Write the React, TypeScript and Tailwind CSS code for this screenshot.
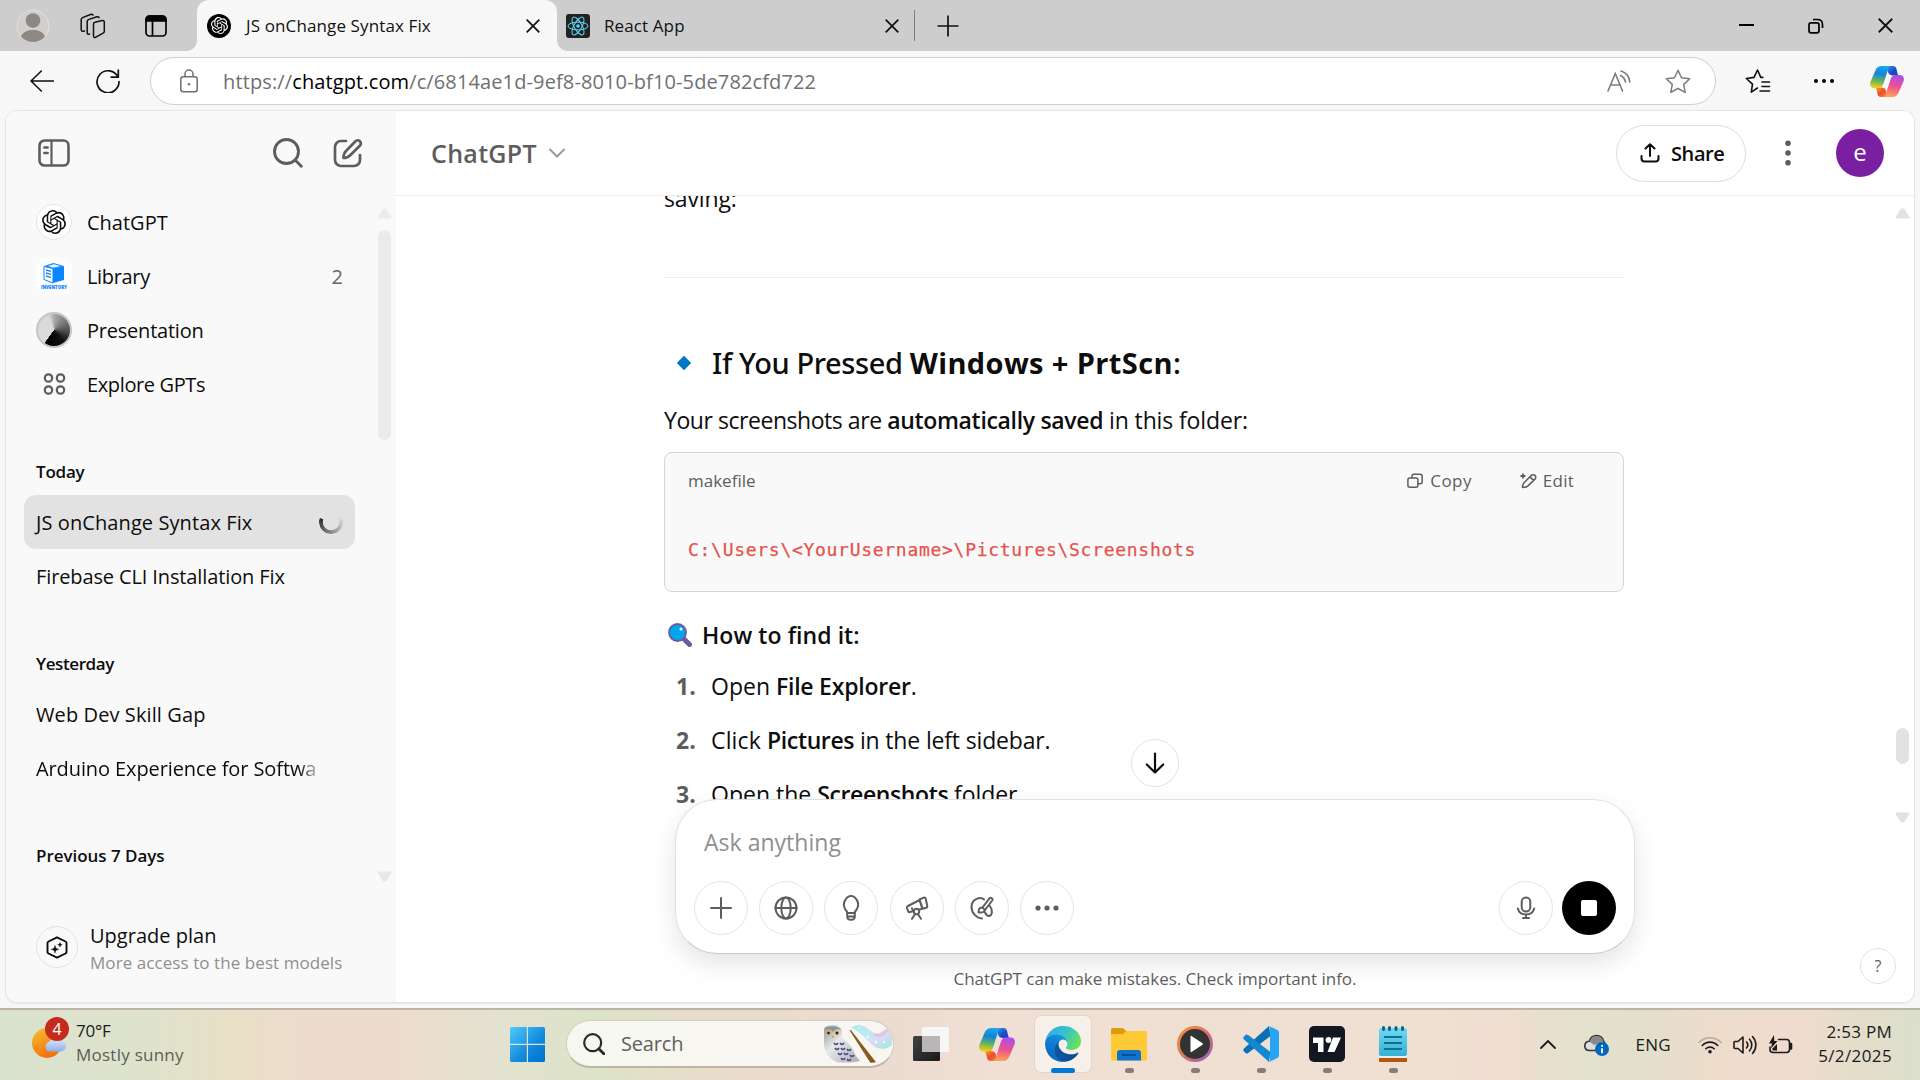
import React from 'react';
import { SiOpenai } from 'react-icons/si';

type IconProps = { className?: string };

function ReactLogo({ className = '' }: IconProps) {
  return (
    <svg viewBox="0 0 24 24" className={className} fill="none" stroke="#61dafb" strokeWidth="1">
      <rect width="24" height="24" rx="3" fill="#222" stroke="none" />
      <ellipse cx="12" cy="12" rx="10" ry="3.9" />
      <ellipse cx="12" cy="12" rx="10" ry="3.9" transform="rotate(60 12 12)" />
      <ellipse cx="12" cy="12" rx="10" ry="3.9" transform="rotate(120 12 12)" />
      <circle cx="12" cy="12" r="1.8" fill="#61dafb" stroke="none" />
    </svg>
  );
}

function Cross({ className = '' }: IconProps) {
  return (
    <svg viewBox="0 0 14 14" className={className} stroke="#111" strokeWidth="1.7">
      <path d="M.7.7l12.6 12.6M13.3.7L.7 13.3" />
    </svg>
  );
}

function Copilot({ className = '', id }: IconProps & { id: string }) {
  return (
    <svg viewBox="0 0 36 33" className={className}>
      <defs>
        <linearGradient id={id + 'a'} x1="0.5" y1="0" x2="0.35" y2="1">
          <stop offset="0" stopColor="#18a8ee" />
          <stop offset=".35" stopColor="#1583d8" />
          <stop offset=".65" stopColor="#5bb06a" />
          <stop offset="1" stopColor="#f5d00c" />
        </linearGradient>
        <linearGradient id={id + 'b'} x1="0" y1="0" x2="1" y2="1">
          <stop offset="0" stopColor="#2aa4f4" />
          <stop offset=".6" stopColor="#1b48c8" />
          <stop offset="1" stopColor="#1746b4" />
        </linearGradient>
        <linearGradient id={id + 'c'} x1="0.6" y1="0" x2="0.4" y2="1">
          <stop offset="0" stopColor="#a94df0" />
          <stop offset=".5" stopColor="#ee5090" />
          <stop offset="1" stopColor="#fca552" />
        </linearGradient>
        <linearGradient id={id + 'd'} x1="0" y1="0" x2="1" y2="1">
          <stop offset="0" stopColor="#f6a01c" />
          <stop offset=".5" stopColor="#ef4b2f" />
          <stop offset="1" stopColor="#fb8a50" />
        </linearGradient>
      </defs>
      <path d="M17 0h7.5c2 0 3 1.2 3.5 3l1.8 7H24c-2.5 0-4-1-4.700-3z" fill={`url(#${id}b)`} />
      <path d="M19 33h-7.500c-2 0-3-1.200-3.500-3L6.200 23H12c2.500 0 4 1 4.700 3z" fill={`url(#${id}d)`} />
      <path d="M5.500 5C6.800 1.600 9 0 12 0h11c-2 0-3 1.200-3.600 3L14 19.500C13.200 22 11.500 23.500 9 23.500H4.500C.8 23.500-.6 20.500.3 17z" fill={`url(#${id}a)`} />
      <path d="M30.500 28C29.200 31.400 27 33 24 33H13c2 0 3-1.200 3.600-3L22 13.500C22.800 11 24.500 9.500 27 9.500h4.500c3.700 0 5.100 3 4.200 6.500z" fill={`url(#${id}c)`} />
    </svg>
  );
}

function TabStrip() {
  return (
    <div className="flex h-[51px] items-center bg-[#cdcdcd]">
      <svg viewBox="0 0 34 34" className="ml-4 h-[34px] w-[34px] shrink-0">
        <circle cx="17" cy="17" r="16" fill="#d2d0cd" stroke="#e3e1dd" strokeWidth="1" />
        <circle cx="17" cy="11.500" r="7.300" fill="#8d8884" />
        <path d="M5 27.500C7 22.500 12 21 17 21s10 1.500 12 6.500A16 16 0 0 1 17 33 16 16 0 0 1 5 27.500z" fill="#8d8884" />
      </svg>
      <svg viewBox="0 0 26 26" className="ml-[30px] h-[26px] w-[26px] shrink-0" fill="none" stroke="#111" strokeWidth="1.500" strokeLinejoin="round" strokeLinecap="round">
        <path d="M15 9.300l7.300-1.700c1.300-.3 2 .3 2 1.500v9.300c0 .9-.4 1.400-1.200 1.700l-7.600 4.200c-1 .5-2-.1-2-1.200V11c0-1 .4-1.500 1.500-1.700z" />
        <path d="M9.500 21c-1.500.5-2.300 0-2.300-1.300V8.500c0-1 .3-1.600 1.200-1.900l8.500-2.800c1-.3 1.800 0 2.200.8" />
        <path d="M4.500 18c-2 .6-3.300.1-3.300-1.600V6.800c0-1 .4-1.800 1.400-2.200L10.500 1.500c1-.4 2-.2 2.500.6" />
      </svg>
      <svg viewBox="0 0 22 22" className="ml-[39px] h-[22px] w-[22px] shrink-0" fill="none" stroke="#000" strokeWidth="1.700">
        <rect x="1" y="1" width="20" height="20" rx="3.500" />
        <path d="M1 6V4.500A3.500 3.500 0 0 1 4.500 1h13A3.500 3.500 0 0 1 21 4.500V6z" fill="#000" />
        <path d="M7.500 6v15" />
      </svg>
      <div className="ml-[20px] h-[10px] w-[10px] shrink-0 self-end bg-[radial-gradient(circle_at_0_0,transparent_9.500px,#f7f7f7_10px)]" />
      <div className="flex h-full w-[360px] shrink-0 items-center rounded-t-xl bg-[#f7f7f7] pl-[10px] pr-[17px]">
        <div className="flex h-6 w-6 items-center justify-center rounded-full bg-black">
          <SiOpenai className="h-[17px] w-[17px] text-white" />
        </div>
        <span className="ml-[15px] flex-1 text-[17px] leading-[51px] tracking-[0.12px]">JS onChange Syntax Fix</span>
        <Cross className="h-[14px] w-[14px]" />
      </div>
      <div className="h-[10px] w-[10px] shrink-0 self-end bg-[radial-gradient(circle_at_100%_0,transparent_9.500px,#f7f7f7_10px)]" />
      <ReactLogo className="-ml-[1px] h-6 w-6" />
      <span className="ml-[14px] w-[281px] text-[17px] leading-[51px] tracking-[0.11px]">React App</span>
      <Cross className="h-[14px] w-[14px]" />
      <div className="ml-[15px] h-[31px] w-px bg-[#7d7d7d]" />
      <svg viewBox="0 0 22 22" className="ml-[22px] h-[22px] w-[22px]" stroke="#111" strokeWidth="1.700">
        <path d="M11 .5v21M.5 11h21" />
      </svg>
      <div className="ml-auto flex items-center gap-[54px] pr-[27px]">
        <svg viewBox="0 0 15 15" className="h-[15px] w-[15px]" stroke="#000" strokeWidth="2">
          <path d="M0 7h15" />
        </svg>
        <svg viewBox="0 0 16 16" className="h-4 w-4" fill="none" stroke="#000" strokeWidth="1.700">
          <rect x="1" y="4.800" width="10" height="10" rx="2" />
          <path d="M5 1.500h4.500c3 0 5 2 5 5V10" />
        </svg>
        <Cross className="h-[15px] w-[15px]" />
      </div>
    </div>
  );
}

function AddressRow() {
  return (
    <div className="flex h-[59px] items-start bg-[#f7f7f7] pt-[6px]">
      <div className="flex h-[48px] w-[150px] shrink-0 items-center">
        <svg viewBox="0 0 24 22" className="ml-[30px] h-[22px] w-6" fill="none" stroke="#111" strokeWidth="1.600" strokeLinecap="round" strokeLinejoin="round">
          <path d="M23.300 11H1M11.300 1L1 11l10.300 10" />
        </svg>
        <svg viewBox="0 0 24 24" className="ml-[42px] h-6 w-6" fill="none" stroke="#111" strokeWidth="1.700" strokeLinecap="round" strokeLinejoin="round">
          <path d="M22 8.200A11 11 0 1 0 23 12.500M22.300 1.200v7h-7" />
        </svg>
      </div>
      <div className="flex h-[48px] w-[1566px] items-center rounded-full border border-[#cfcfcf] bg-white">
        <svg viewBox="0 0 18 24" className="ml-[29px] h-6 w-[18px]" fill="none" stroke="#6f6f6f" strokeWidth="1.500">
          <rect x=".8" y="7.800" width="16.400" height="15" rx="2.500" />
          <path d="M5 7.800V5a4 4 0 0 1 8 0v2.800" />
          <circle cx="9" cy="15.300" r="1.200" fill="#6f6f6f" stroke="none" />
        </svg>
        <span className="mt-[1px] ml-[25px] text-[20px] leading-[47px] tracking-[0.12px] text-[#707070]">
          https://<span className="text-black">chatgpt.com</span>/c/6814ae1d-9ef8-8010-bf10-5de782cfd722
        </span>
        <div className="ml-auto flex items-center gap-[34px] pr-[24px]">
          <svg viewBox="0 0 24 22" className="h-[22px] w-6" fill="none" stroke="#7b7b7b" strokeWidth="1.600" strokeLinecap="round">
            <path d="M1 21L8.300 3.500 15.500 21M3.500 15h9.700M14 1a13 13 0 0 1 8.800 11M13.500 5.500a9 9 0 0 1 5 6.500" />
          </svg>
          <svg viewBox="0 0 26 25" className="h-[25px] w-[26px]" fill="none" stroke="#7b7b7b" strokeWidth="1.500" strokeLinejoin="round">
            <path d="M13 1.300l3.500 7.400 8.200 1.100-6 5.600 1.500 8-7.200-3.900-7.200 3.900 1.500-8-6-5.600 8.200-1.100z" />
          </svg>
        </div>
      </div>
      <div className="flex h-[48px] items-center">
        <svg viewBox="0 0 26 25" className="ml-[29px] h-[25px] w-[26px]" fill="none" stroke="#111" strokeWidth="1.600" strokeLinejoin="round" strokeLinecap="round">
          <path d="M12.500 19l-6.200 4.200 1.200-8L1.300 9.500l7.700-1.100L12.500 1l3.300 7.400h2M17 13h7.500M17 17.500h7.500M15 22h9.500" />
        </svg>
        <svg viewBox="0 0 20 4" className="ml-[43px] h-1 w-5" fill="#000">
          <circle cx="2" cy="2" r="2" />
          <circle cx="10" cy="2" r="2" />
          <circle cx="18" cy="2" r="2" />
        </svg>
        <Copilot id="tb" className="ml-[36px] h-[31px] w-[34px]" />
      </div>
    </div>
  );
}

function Triangle({ className = '', fill, down }: IconProps & { fill: string; down?: boolean }) {
  return (
    <svg viewBox="0 0 15 11" className={className} fill={fill} stroke={fill} strokeWidth="2" strokeLinejoin="round">
      {down ? <path d="M1.500 1.500h12L8.500 9.500h-2z" /> : <path d="M1.500 9.500h12L8.500 1.500h-2z" />}
    </svg>
  );
}

function InventoryIcon() {
  return (
    <svg viewBox="0 0 36 36" className="h-9 w-9">
      <rect width="36" height="36" rx="10" fill="#fdfdfd" />
      <path d="M8 8.500l9 2v14.500l-9-3.500z" fill="#fff" stroke="#0a84ff" strokeWidth="1" />
      <path d="M17 10.500l11-2.500v14L17 25z" fill="#0a84ff" />
      <path d="M8 8l9.500-3L28 8l-11 2.800z" fill="#0a84ff" />
      <path d="M12 8l6-1.700L24.500 8 17 9.700z" fill="#fff" />
      <path d="M10 12l5 1.300M10 15l5 1.300M10 18l5 1.300" stroke="#0a84ff" strokeWidth="1.300" />
      <text x="18" y="30.500" textAnchor="middle" fontFamily="Open Sans, sans-serif" fontSize="4.400" fontWeight="800" fill="#0a84ff" textLength="26">INVENTORY</text>
    </svg>
  );
}

function GptItem({ icon, label, track, count }: { icon: React.ReactNode; label: string; track: string; count?: string }) {
  return (
    <div className="flex h-[54px] items-center pl-3 pr-3">
      <div className="flex h-9 w-9 items-center justify-center">{icon}</div>
      <span className={'mt-[2px] ml-[15px] flex-1 text-[20px] ' + track}>{label}</span>
      {count && <span className="mt-[2px] text-[20px] text-[#666]">{count}</span>}
    </div>
  );
}

function Sidebar() {
  return (
    <aside className="flex w-[390px] shrink-0 flex-col bg-[#f9f9f9] text-[#0d0d0d]">
      <div className="flex h-[84px] items-center pl-[32px] text-[#5d5d5d]">
        <svg viewBox="0 0 32 28" className="h-7 w-8" fill="none" stroke="currentColor" strokeWidth="2.600">
          <rect x="1.500" y="1.500" width="29" height="25" rx="5" />
          <path d="M13.500 1.500v25" strokeWidth="2.200" />
          <path d="M6.300 8.500h3.400M6.300 14h3.400" strokeWidth="2.400" strokeLinecap="round" />
        </svg>
        <svg viewBox="0 0 30 30" className="ml-[203px] h-[30px] w-[30px]" fill="none" stroke="currentColor" strokeWidth="2.900" strokeLinecap="round">
          <circle cx="13.500" cy="13.500" r="12" />
          <path d="M22.300 22.300l6 6" />
        </svg>
        <svg viewBox="0 0 30 30" className="ml-[30px] h-[30px] w-[30px]" fill="none" stroke="currentColor" strokeWidth="2.700" strokeLinecap="round" strokeLinejoin="round">
          <path d="M13 3H8a6 6 0 0 0-6 6v13a6 6 0 0 0 6 6h13a6 6 0 0 0 6-6v-5" />
          <path d="M10.500 20c0-3 .5-5 2.500-7L22.500 3.300a3 3 0 0 1 4.500 4.200L17.500 17c-2 2-4 3-7 3z" />
        </svg>
      </div>
      <div className="flex h-[705px]">
        <div className="w-[331px] ml-[18px]">
          <GptItem
            icon={
              <div className="flex h-9 w-9 items-center justify-center rounded-full border border-[#e5e5e5] bg-white">
                <SiOpenai className="h-6 w-6 text-[#0d0d0d]" />
              </div>
            }
            label="ChatGPT"
            track=""
          />
          <GptItem icon={<InventoryIcon />} label="Library" track="tracking-[-0.33px]" count="2" />
          <GptItem
            icon={<div className="h-9 w-9 rounded-full border-2 border-[#c6c6c6] bg-[conic-gradient(#aaa_0deg,#555_90deg,#111_140deg,#000_215deg,#dcdcdc_217deg,#d8d8d8_340deg,#aaa_360deg)]" />}
            label="Presentation"
            track="tracking-[-0.22px]"
          />
          <GptItem
            icon={
              <svg viewBox="0 0 24 24" className="h-6 w-6" fill="none" stroke="#5d5d5d" strokeWidth="2.200">
                <circle cx="6.500" cy="6" r="3.700" />
                <circle cx="18.500" cy="6" r="3.700" />
                <circle cx="6.500" cy="18" r="3.700" />
                <circle cx="18.500" cy="18" r="3.700" />
              </svg>
            }
            label="Explore GPTs"
            track="tracking-[-0.37px]"
          />
          <h3 className="mt-[49px] h-[24px] pl-3 text-[17px] leading-6 font-semibold tracking-[-0.2px]">Today</h3>
          <div className="mt-[11px] flex h-[54px] items-center rounded-xl bg-[#e2e2e2] px-3">
            <span className="mt-[2px] flex-1 text-[20px] tracking-[0.09px]">JS onChange Syntax Fix</span>
            <div className="h-6 w-6 rounded-full bg-[conic-gradient(transparent_50deg,#e0e0e0_60deg,#aaa_140deg,#333_280deg,#333_288deg,transparent_292deg)] [mask:radial-gradient(circle,transparent_7.800px,#000_8.600px)]" />
          </div>
          <div className="flex h-[54px] items-center px-3 pt-[2px] text-[20px] tracking-[-0.12px]">Firebase CLI Installation Fix</div>
          <h3 className="mt-[49px] h-[24px] pl-3 text-[17px] leading-6 font-semibold tracking-[-0.4px]">Yesterday</h3>
          <div className="mt-[11px] flex h-[54px] items-center px-3 pt-[2px] text-[20px] tracking-[0.1px]">Web Dev Skill Gap</div>
          <div className="flex h-[54px] items-center px-3 pt-[2px] text-[20px] tracking-[-0.1px]">
            <span className="w-[282px] overflow-hidden whitespace-nowrap [mask-image:linear-gradient(90deg,#000_262px,transparent_288px)]">Arduino Experience for Softwa</span>
          </div>
          <h3 className="mt-[49px] h-[24px] pl-3 text-[17px] leading-6 font-semibold tracking-[-0.04px]">Previous 7 Days</h3>
        </div>
        <div className="ml-[22px] flex w-[15px] flex-col items-center">
          <Triangle fill="#ececec" className="mt-[13px] h-[11px] w-[15px]" />
          <div className="mt-[11px] h-[210px] w-[13px] rounded-full bg-[#ebebeb]" />
          <Triangle fill="#e8e8e8" down className="mt-[431px] h-[11px] w-[15px] shrink-0" />
        </div>
      </div>
      <div className="flex items-start pl-[30px] pt-[26px]">
        <div className="flex h-[42px] w-[42px] items-center justify-center rounded-full border border-[#e2e2e2]">
          <svg viewBox="0 0 22 23" className="h-[23px] w-[22px]" fill="none" stroke="#0d0d0d" strokeWidth="1.900" strokeLinejoin="round">
            <path d="M11 1.300l8.500 4.200q1 .5 1 1.500v9q0 1-1 1.500L11 21.700l-8.500-4.200q-1-.5-1-1.500V7q0-1 1-1.500z" />
            <path d="M9 9.500c.4 2.500 1.300 3.400 3.800 3.800-2.500.4-3.400 1.300-3.800 3.800-.4-2.500-1.300-3.400-3.800-3.800 2.500-.4 3.400-1.300 3.800-3.800zM14 6.500c.2 1.500.8 2 2.200 2.200-1.400.3-2 .8-2.200 2.300-.3-1.500-.8-2-2.300-2.300 1.500-.2 2-.7 2.300-2.200z" fill="#0d0d0d" strokeWidth=".5" />
          </svg>
        </div>
        <div className="-mt-[4px] ml-[12px] flex flex-col">
          <span className="text-[20px] leading-[28px] tracking-[0.02px]">Upgrade plan</span>
          <span className="text-[17px] leading-[26px] tracking-[0.07px] text-[#8f8f8f]">More access to the best models</span>
        </div>
      </div>
    </aside>
  );
}

function MainHeader() {
  return (
    <header className="flex h-[85px] shrink-0 items-center border-b border-[#ededed] pl-[35px] pr-[30px]">
      <h1 className="mt-[1px] text-[25px] leading-none font-semibold tracking-[0.3px] text-[#5d5d5d]">ChatGPT</h1>
      <svg viewBox="0 0 18 10" className="ml-[11px] h-[10px] w-[18px]" fill="none" stroke="#999" strokeWidth="2">
        <path d="M1.500 1L9 8.500 16.500 1" />
      </svg>
      <div className="ml-auto flex h-[57px] w-[130px] items-center rounded-full border border-[#dddddd] pl-[23px] text-[#0d0d0d]">
        <svg viewBox="0 0 20 20" className="h-5 w-5" fill="none" stroke="currentColor" strokeWidth="2" strokeLinecap="round" strokeLinejoin="round">
          <path d="M1.500 13v2.500a3 3 0 0 0 3 3h11a3 3 0 0 0 3-3V13M10 13V1.500M5.500 5.500L10 1.200l4.500 4.300" />
        </svg>
        <span className="mt-[1px] ml-[11px] text-[20px] font-semibold tracking-[-0.4px]">Share</span>
      </div>
      <svg viewBox="0 0 6 26" className="ml-[39px] h-[26px] w-[6px]" fill="#5d5d5d">
        <circle cx="3" cy="3.200" r="2.800" />
        <circle cx="3" cy="13" r="2.800" />
        <circle cx="3" cy="22.800" r="2.800" />
      </svg>
      <div className="ml-[45px] flex h-12 w-12 items-center justify-center rounded-full bg-[#7b1fa2] pb-[3px] text-[24px] font-medium text-white">e</div>
    </header>
  );
}

function ListRow({ n, children }: { n: number; children: React.ReactNode }) {
  return (
    <li className="flex h-9 leading-9">
      <span className="w-[47px] pl-[12px] font-bold text-[#5d5d5d]">{n}.</span>
      <span className="whitespace-pre">{children}</span>
    </li>
  );
}

function Article() {
  return (
    <div className="ml-[268px] w-[960px] text-[23px] text-[#0d0d0d]">
      <p className="-mt-[16px] h-9 leading-9 tracking-[-0.14px]">saving:</p>
      <hr className="mt-[61px] border-[#ececec]" />
      <h3 className="mt-[65px] flex h-10 items-center text-[29px] leading-10 font-medium">
        <svg viewBox="0 0 16 16" className="ml-3 h-4 w-4">
          <path d="M8 .8L15.200 8 8 15.200.8 8z" fill="#0077c2" />
        </svg>
        <span className="ml-[20px] font-['Noto_Sans',sans-serif] whitespace-pre tracking-[-0.38px]">If You Pressed </span>
        <b className="whitespace-pre font-bold tracking-[0.38px]">Windows + PrtScn</b>
        <span className="font-semibold">:</span>
      </h3>
      <p className="mt-[19px] h-9 leading-9 tracking-[-0.3px]">
        <span className="tracking-[-0.45px]">Your screenshots are </span>
        <b className="font-semibold tracking-[-0.32px]">automatically saved</b>
        <span className="tracking-[-0.13px]"> in this folder:</span>
      </p>
      <div className="mt-[14px] h-[140px] rounded-lg border border-[#d4d4d4] bg-[#f9f9f9] pl-[23px]">
        <div className="flex h-[56px] items-center text-[17px] text-[#5d5d5d]">
          <span>makefile</span>
          <svg viewBox="0 0 16 16" className="ml-auto h-4 w-4" fill="none" stroke="currentColor" strokeWidth="1.500">
            <rect x=".9" y="5" width="10" height="9.300" rx="2" />
            <path d="M5 5V3.200a2 2 0 0 1 2-2h6.200a2 2 0 0 1 2 2v5.600a2 2 0 0 1-2 2H11" />
          </svg>
          <span className="ml-[7px] tracking-[0.4px]">Copy</span>
          <svg viewBox="0 0 17 16" className="ml-[48px] h-4 w-[17px]" fill="none" stroke="currentColor" strokeWidth="1.500" strokeLinejoin="round">
            <path d="M2.500 14.500c0-2.500.3-3.500 1.500-4.800l7.300-7.300a2.600 2.600 0 0 1 3.700 3.700l-7.300 7c-1.300 1.200-2.500 1.400-5.200 1.400zM10.500 3.500c.2 2 1.300 3 3.300 3.300" />
            <path d="M3 .5v5M.5 3h5" strokeWidth="1.800" />
          </svg>
          <span className="mr-[49px] ml-[6px] tracking-[0.25px]">Edit</span>
        </div>
        <code className="mt-[29px] block font-['DejaVu_Sans_Mono',monospace] text-[18px] leading-6 tracking-[0.71px] text-[#e5534b] [-webkit-text-stroke:0.25px_#e5534b]">
          {'C:\\Users\\<YourUsername>\\Pictures\\Screenshots'}
        </code>
      </div>
      <h4 className="mt-[25px] flex h-9 items-center leading-9 font-semibold">
        <svg viewBox="0 0 24 24" className="ml-1 h-6 w-6">
          <path d="M15.500 15.500l6 6" stroke="#6b5ba0" strokeWidth="5" strokeLinecap="round" />
          <circle cx="9.500" cy="9.500" r="8.500" fill="#00a6ed" stroke="#6b5ba0" strokeWidth="1.800" />
          <circle cx="13" cy="6" r="1.500" fill="#fff" />
        </svg>
        <span className="ml-[10px] tracking-[0.07px]">How to find it:</span>
      </h4>
      <ol className="mt-[15px] flex flex-col gap-[18px]">
        <ListRow n={1}>
          Open <b className="font-semibold tracking-[-0.23px]">File Explorer</b>.
        </ListRow>
        <ListRow n={2}>
          <span className="tracking-[0.15px]">Click </span>
          <b className="font-semibold tracking-[-0.38px]">Pictures</b>
          <span className="tracking-[-0.16px]"> in the left sidebar.</span>
        </ListRow>
        <ListRow n={3}>
          Open the <b className="font-semibold tracking-[-0.38px]">Screenshots</b>
          <span className="tracking-[-0.1px]"> folder.</span>
        </ListRow>
      </ol>
    </div>
  );
}

function RoundButton({ children }: { children: React.ReactNode }) {
  return <button className="flex h-[54px] w-[54px] items-center justify-center rounded-full border border-[#e5e5e5] text-[#5d5d5d]">{children}</button>;
}

const line = { fill: 'none', stroke: 'currentColor', strokeWidth: 2, strokeLinecap: 'round', strokeLinejoin: 'round' } as const;

function Composer() {
  return (
    <div className="flex h-[155px] w-[960px] flex-col rounded-[42px] border border-[#e0e0e0] border-b-[#c9c9c9] bg-white pr-[18px] pl-[18px] shadow-[0_10px_26px_rgba(0,0,0,0.11)]">
      <div className="mt-[24px] h-9 pl-[10px] text-[23px] leading-9 tracking-[0.02px] text-[#8f8f8f]">Ask anything</div>
      <div className="mt-[21px] flex gap-[11.2px]">
        <RoundButton>
          <svg viewBox="0 0 24 24" className="h-6 w-6" {...line}>
            <path d="M12 2v20M2 12h20" />
          </svg>
        </RoundButton>
        <RoundButton>
          <svg viewBox="0 0 24 24" className="h-6 w-6" {...line}>
            <circle cx="12" cy="12" r="10.500" />
            <ellipse cx="12" cy="12" rx="4.700" ry="10.500" />
            <path d="M1.500 12h21" />
          </svg>
        </RoundButton>
        <RoundButton>
          <svg viewBox="0 0 24 26" className="h-[26px] w-6" {...line}>
            <path d="M8.200 18c0-1.800-.8-2.600-2-3.800A9 9 0 0 1 12 .8a9 9 0 0 1 5.800 13.400c-1.200 1.200-2 2-2 3.800zM8.200 18v3.500c0 2 1.200 3.300 3.800 3.300s3.800-1.300 3.800-3.300V18M8.500 21.500h7" />
          </svg>
        </RoundButton>
        <RoundButton>
          <svg viewBox="0 0 24 24" className="h-6 w-6" {...line}>
            <path d="M14.500 3.500l4.200-1.800c.9-.4 1.600-.1 2 .8l1.500 7.300c.3 1-.1 1.600-1 1.900l-3.500 1zM14.500 4L3 10c-1 .5-1.300 1-1 2l1 3c.3 1 1 1.300 2 1l12.300-3.300M14.500 4l2.800 8.700M8 15.300l-1-3" />
            <circle cx="11.500" cy="15.500" r="2.700" fill="#fff" />
            <path d="M10 18.300l-3 4.500M13 18.300l3 4.500" />
          </svg>
        </RoundButton>
        <RoundButton>
          <svg viewBox="0 0 24 24" className="h-6 w-6" {...line}>
            <path d="M14 3.500C11 .5 1.500 2.500 1.500 11c0 6 5 11 10.500 11.500" />
            <path d="M12.500 11.500L19.500 2.300c1.600-1.300 3.800.3 2.700 2.200L15 14" />
            <path d="M12.500 11.500c-3-.2-4 1.500-3.900 5 3.500.3 5.700 0 6.400-2.500l-2.500-2.500" />
            <path d="M19.500 9.500c3.500 4.500 3 10-.5 10.500-2 .3-3-1.500-4-3.500" />
          </svg>
        </RoundButton>
        <RoundButton>
          <svg viewBox="0 0 24 6" className="h-[6px] w-6" fill="currentColor">
            <circle cx="3" cy="3" r="2.600" />
            <circle cx="12" cy="3" r="2.600" />
            <circle cx="21" cy="3" r="2.600" />
          </svg>
        </RoundButton>
        <div className="ml-auto flex gap-[9px]">
          <RoundButton>
            <svg viewBox="0 0 20 24" className="h-6 w-5" {...line}>
              <rect x="5.700" y="1.500" width="8.600" height="14" rx="4.300" />
              <path d="M1.800 12.500c1 4 4.500 6 8.200 6s7.200-2 8.200-6M10 18.500v3.500M7 22h6" />
            </svg>
          </RoundButton>
          <button className="flex h-[54px] w-[54px] items-center justify-center rounded-full bg-black">
            <span className="h-4 w-4 rounded-[2px] bg-white" />
          </button>
        </div>
      </div>
    </div>
  );
}

function Main() {
  return (
    <main className="relative flex flex-1 flex-col overflow-hidden bg-white">
      <MainHeader />
      <div className="flex h-[640px] overflow-hidden">
        <Article />
        <div className="ml-auto flex w-[15px] flex-col items-center mr-[4px]">
          <Triangle fill="#e2e2e2" className="mt-[12px] h-[11px] w-[15px]" />
          <div className="mt-[509px] h-9 w-[13px] shrink-0 rounded-full bg-[#e2e2e2]" />
          <Triangle fill="#e2e2e2" down className="mt-[48px] h-[11px] w-[15px] shrink-0" />
        </div>
      </div>
      <div className="absolute top-[628px] left-[735px] flex h-12 w-12 items-center justify-center rounded-full border border-[#e2e2e2] bg-white text-[#0d0d0d]">
        <svg viewBox="0 0 20 22" className="h-[22px] w-5" {...line} strokeWidth={2.200}>
          <path d="M10 1.500v19M1.800 12.500L10 20.500l8.200-8" />
        </svg>
      </div>
      <div className="absolute top-[688px] left-[279px]">
        <Composer />
        <p className="mt-[13px] text-center text-[17px] leading-6 tracking-[-0.02px] text-[#5d5d5d]">ChatGPT can make mistakes. Check important info.</p>
      </div>
      <div className="absolute right-[18px] bottom-[18px] flex h-9 w-9 items-center justify-center rounded-full border border-[#e2e2e2] text-[16px] text-[#5d5d5d]">?</div>
    </main>
  );
}

function Owl() {
  return (
    <svg viewBox="0 0 72 40" className="h-10 w-[72px]">
      <defs>
        <linearGradient id="silk" x1="0" y1="0" x2="1" y2="1">
          <stop offset="0" stopColor="#a9ece8" />
          <stop offset=".4" stopColor="#bfe9f2" />
          <stop offset=".6" stopColor="#d9dcf6" />
          <stop offset="1" stopColor="#9fe8dc" />
        </linearGradient>
        <linearGradient id="owlb" x1="0" y1="0" x2="1" y2="1">
          <stop offset="0" stopColor="#8f969c" />
          <stop offset=".4" stopColor="#e6e8ea" />
          <stop offset="1" stopColor="#aaadb8" />
        </linearGradient>
      </defs>
      <path d="M3 6C3 2 8 1.500 12 1.500S21 3 21 8c0 3-1 4-1 5 6 4 12 11 14 17 1 3 4 5 5 7l-8 1.500H17C9 36 3 28 3 19z" fill="url(#owlb)" />
      <path d="M4 6C5 1.500 19 1.500 20 6c-3-2-6-1-8 2-2-3-5-4-8-2z" fill="#8c9298" />
      <circle cx="7.500" cy="9" r="2.200" fill="#e8a51d" />
      <circle cx="16" cy="9" r="2.200" fill="#e8a51d" />
      <circle cx="7.500" cy="9" r="1.300" fill="#222" />
      <circle cx="16" cy="9" r="1.300" fill="#222" />
      <path d="M11 12l2 0-1 3z" fill="#d99a26" />
      <path d="M13 19q2 3 4 0M19 19q2 3 4 0M14 24q2 3 4 0M20 24q2 3 4 0M26 25q2 3 4 0M17 29q2 3 4 0M23 29q2 3 4 0M29 31q2 3 4 0M20 34q2 3 4 0M26 35q2 3 4 0" fill="none" stroke="#544d7d" strokeWidth="1.600" />
      <path d="M30 4C36-1 42 1 46 4s9 8 14 4c4-3 8-5 10-4 1 6 2 14 0 18-7 5-15 3-20-2S37 6 30 4z" fill="url(#silk)" />
      <path d="M53 10q8 4 13-4" stroke="#f3b3dd" strokeWidth="2.500" fill="none" opacity=".8" />
      <path d="M29.500 6l25 32-5 .5-20.500-32z" fill="#8a5a12" stroke="#6b430c" strokeWidth=".5" />
      <g fill="#fff">
        <circle cx="47" cy="13" r="1" />
        <circle cx="55" cy="18" r="1.200" />
        <circle cx="63" cy="18" r="1" />
        <circle cx="38" cy="4" r=".8" />
      </g>
    </svg>
  );
}

function TaskApp({ children, open, active }: { children: React.ReactNode; open?: boolean; active?: boolean }) {
  return (
    <div className={'mx-[5px] flex h-[56px] w-[56px] flex-col items-center rounded-md ' + (active ? 'bg-[#f7efea] shadow-[0_0_0_1px_rgba(225,210,198,0.8)]' : '')}>
      <div className="mt-[10px] flex h-9 w-9 items-center justify-center">{children}</div>
      {active && <div className="mt-[6px] h-[5px] w-6 shrink-0 rounded-full bg-[#0078d4]" />}
      {open && <div className="mt-[6px] h-[5px] w-[9px] shrink-0 rounded-full bg-[#877d76]" />}
    </div>
  );
}

function EdgeIcon() {
  return (
    <svg viewBox="0 0 256 256" className="h-9 w-9">
      <defs>
        <linearGradient id="e1" x1="0" x2="1">
          <stop offset="0" stopColor="#0c59a4" />
          <stop offset="1" stopColor="#114a8b" />
        </linearGradient>
        <linearGradient id="e2" x1=".8" y1="0" x2=".3" y2="1">
          <stop offset="0" stopColor="#1b9de2" />
          <stop offset=".5" stopColor="#0f7cd2" />
          <stop offset="1" stopColor="#0a63b8" />
        </linearGradient>
        <linearGradient id="e3" x1="0" y1=".2" x2="1" y2=".6">
          <stop offset="0" stopColor="#35a9e8" />
          <stop offset=".5" stopColor="#34c1d0" />
          <stop offset="1" stopColor="#66e555" />
        </linearGradient>
      </defs>
      <path fill="url(#e1)" d="M231 190.500c-3.400 1.800-6.900 3.400-10.500 4.700a101.800 101.800 0 0 1-35.800 6.400c-47.200 0-88.300-32.500-88.300-74.100a31.600 31.600 0 0 1 16.400-27.300c-42.700 1.800-53.700 46.300-53.700 72.400 0 73.800 68.100 81.300 82.800 81.300 7.900 0 19.800-2.300 27-4.600l1.300-.4a128.300 128.300 0 0 0 66.600-52.800 4 4 0 0 0-5.800-5.600z" />
      <path fill="url(#e2)" d="M105.700 241.400a79.200 79.200 0 0 1-22.700-21.300 80.700 80.700 0 0 1 29.900-119.900c3.100-1.500 8.500-4.200 15.600-4.100a32.400 32.400 0 0 1 25.700 13 31.900 31.900 0 0 1 6.300 18.700c0-.2 24.500-79.600-80-79.600-43.900 0-80 41.600-80 78.200a130.200 130.200 0 0 0 12.100 56 128 128 0 0 0 156.400 67.100 75.600 75.600 0 0 1-62.800-8.100z" />
      <path fill="url(#e3)" d="M152.300 148.900c-.8 1-3.300 2.500-3.300 5.700 0 2.600 1.700 5.100 4.700 7.200 14.400 10 41.500 8.700 41.600 8.700a59.600 59.600 0 0 0 30.300-8.300 61.400 61.400 0 0 0 30.400-52.900c.3-22.400-8-37.300-11.300-43.900C223.500 23.900 177.700 0 128 0A128 128 0 0 0 0 126.200c.5-36.500 36.800-66 80-66 3.500 0 23.500.3 42 10.100a72.600 72.600 0 0 1 30.900 29.300c6.100 10.600 7.200 24.100 7.200 29.500s-2.700 13.300-7.800 19.800z" />
    </svg>
  );
}

function Taskbar() {
  return (
    <footer className="flex h-[72px] items-start border-t-2 border-[#bab3a6] bg-[linear-gradient(90deg,#d9e2cf_0px,#dfe3cc_150px,#e9dfc6_235px,#eddccd_300px,#eddccd_400px,#e3e2d0_500px,#dce3c6_600px,#e8dccb_700px,#ecdbd0_900px,#f0dfd4_1000px,#efe0d2_1440px,#efddd0_1510px,#e3e2cd_1580px,#e2dfca_1640px,#eedccb_1720px,#efdccf_1800px,#e3ddc9_1860px,#dbdfcd_1920px)]">
      <div className="flex w-[500px] shrink-0 pt-[5px] pl-[31px]">
        <div className="relative h-[46px] w-[40px]">
          <svg viewBox="0 0 40 46" className="h-[46px] w-10">
            <defs>
              <linearGradient id="sun" x1=".2" y1="0" x2=".7" y2="1">
                <stop offset="0" stopColor="#f5bb2f" />
                <stop offset="1" stopColor="#f26a0d" />
              </linearGradient>
              <linearGradient id="cl" x1="0" y1="0" x2="0" y2="1">
                <stop offset="0" stopColor="#dce9fd" />
                <stop offset="1" stopColor="#8fb0ec" />
              </linearGradient>
            </defs>
            <circle cx="16" cy="28" r="15" fill="url(#sun)" />
            <path d="M18 36.500a5 5 0 0 1 0-9.500 6.500 6.500 0 0 1 11-1.500 5.500 5.500 0 0 1 1 11z" fill="url(#cl)" />
          </svg>
          <div className="absolute top-[2px] left-[14px] flex h-6 w-6 items-center justify-center rounded-full bg-[#c42b1c] text-[16px] font-medium text-white">4</div>
        </div>
        <div className="mt-[4px] ml-[5px] flex flex-col text-[17px] leading-6">
          <span className="tracking-[-0.25px] text-[#1b1b1b]">70°F</span>
          <span className="tracking-[0.25px] text-[#5d5d55]">Mostly sunny</span>
        </div>
      </div>
      <svg viewBox="0 0 35 35" className="mt-[17px] ml-[10px] h-[35px] w-[35px]">
        <defs>
          <linearGradient id="win" x1="0" y1="0" x2="1" y2="1">
            <stop offset="0" stopColor="#4fcbfb" />
            <stop offset=".6" stopColor="#1189dd" />
            <stop offset="1" stopColor="#0070cc" />
          </linearGradient>
        </defs>
        <path fill="url(#win)" d="M1.500 0H16.800V16.800H0V1.500Q0 0 1.500 0zM18 0H33.500Q35 0 35 1.500V16.800H18zM0 18H16.800V35H1.500Q0 35 0 33.500zM18 18H35V33.500Q35 35 33.500 35H18z" />
      </svg>
      <div className="mt-[10px] ml-[21px] flex h-[48px] w-[328px] items-center overflow-hidden rounded-full border border-[#d5cfc0] border-b-2 border-b-[#c2b5a6] bg-[linear-gradient(90deg,#f6f8f0,#f9f6f1)]">
        <svg viewBox="0 0 22 22" className="ml-[16px] h-[22px] w-[22px]" fill="none" stroke="#2a2a2a" strokeWidth="2.200" strokeLinecap="round">
          <circle cx="9.700" cy="9.700" r="8.500" />
          <path d="M16 16l5 5" strokeWidth="2.800" />
        </svg>
        <span className="mt-[1px] ml-[16px] text-[20px] tracking-[-0.17px] text-[#5f5f5b]">Search</span>
        <div className="ml-auto pt-[1px]">
          <Owl />
        </div>
      </div>
      <svg viewBox="0 0 36 36" className="mt-[16px] mr-[15px] ml-[19px] h-9 w-9">
        <defs>
          <linearGradient id="tv1" x1="0" y1="0" x2="1" y2="1">
            <stop offset="0" stopColor="#444" />
            <stop offset="1" stopColor="#181818" />
          </linearGradient>
        </defs>
        <rect x="0" y="10" width="27" height="25" rx="1.500" fill="url(#tv1)" />
        <rect x="9" y="1" width="27" height="25" rx="1.500" fill="#f6f6f6" />
        <path d="M9 10H27V26H10.500Q9 26 9 24.500z" fill="#b8b6b6" />
      </svg>
      <div className="flex pt-[6px]">
        <TaskApp>
          <Copilot id="tk" className="h-[33px] w-9" />
        </TaskApp>
        <TaskApp active>
          <EdgeIcon />
        </TaskApp>
        <TaskApp open>
          <svg viewBox="0 0 36 36" className="h-9 w-9">
            <path d="M0 3.500Q0 2 1.500 2H11Q12 2 13 3l2.500 2.500V10H0z" fill="#dd9c05" />
            <path d="M0 8H12L15.500 5H36V33.500Q36 34.500 35 34.500H1Q0 34.500 0 33.500z" fill="#fdca35" />
            <path d="M6 34.500V27q0-3 3-3H27q3 0 3 3v7.500z" fill="#0f72cb" />
            <path d="M11 29H25" stroke="#0b4a91" strokeWidth="1.800" />
          </svg>
        </TaskApp>
        <TaskApp open>
          <svg viewBox="0 0 36 36" className="h-9 w-9">
            <defs>
              <linearGradient id="mp" x1="0" y1="0" x2="1" y2="1">
                <stop offset="0" stopColor="#fb9238" />
                <stop offset=".5" stopColor="#d9735f" />
                <stop offset="1" stopColor="#8e5cd0" />
              </linearGradient>
            </defs>
            <circle cx="18" cy="18" r="18" fill="url(#mp)" />
            <circle cx="18" cy="18" r="15" fill="#333" />
            <path d="M13.500 10.500Q13.500 9.500 14.500 10L25.500 17.200Q26.500 18 25.500 18.800L14.500 26Q13.500 26.500 13.500 25.500z" fill="#fff" />
          </svg>
        </TaskApp>
        <TaskApp open>
          <svg viewBox="0 0 36 36" className="h-9 w-9">
            <path d="M26 0L1 22.500q-1.500 1.500 0 3l1.500 1.500q1.200 1 2.700 0L27.500 10z" fill="#0a6fb5" />
            <path d="M26 36L1 13.500q-1.500-1.500 0-3L2.500 9q1.200-1 2.700 0L27.500 26z" fill="#1188d0" />
            <path d="M26 0l8.500 4q1.500.8 1.500 2.500v23q0 1.700-1.500 2.500L26 36q1-1 1-3V3q0-2-1-3z" fill="#27a5f2" />
          </svg>
        </TaskApp>
        <TaskApp open>
          <svg viewBox="0 0 36 36" className="h-9 w-9">
            <rect width="36" height="36" rx="5" fill="#131722" />
            <path d="M4 11.500H14.500V26H9V17H4zM24 11.500H32L25.500 26H18.500z" fill="#fff" />
            <circle cx="19.500" cy="14" r="2.900" fill="#fff" />
          </svg>
        </TaskApp>
        <TaskApp open>
          <svg viewBox="0 0 28 36" className="h-9 w-7">
            <defs>
              <linearGradient id="np" x1="0" y1="0" x2="0" y2="1">
                <stop offset="0" stopColor="#6ed9f2" />
                <stop offset="1" stopColor="#35b1d4" />
              </linearGradient>
            </defs>
            <rect y="30" width="28" height="6" rx="1" fill="#b5560f" />
            <rect y="29" width="28" height="3" fill="#eee" />
            <rect y="2" width="28" height="28" rx="2" fill="url(#np)" />
            <path d="M4.500 1.500v2M10.500 1.500v2M17 1.500v2M23.500 1.500v2" stroke="#0d6584" strokeWidth="3" strokeLinecap="round" />
            <path d="M5 11H23M5 17H23M5 23H23" stroke="#10708f" strokeWidth="1.900" />
          </svg>
        </TaskApp>
      </div>
      <div className="ml-auto flex h-[69px] items-center pr-[28px] text-[17px] text-[#1b1b1b]">
        <svg viewBox="0 0 16 9" className="h-[9px] w-4" fill="none" stroke="currentColor" strokeWidth="1.800" strokeLinecap="round">
          <path d="M1 8l7-7 7 7" />
        </svg>
        <svg viewBox="0 0 25 22" className="ml-[28px] h-[22px] w-[25px]">
          <path d="M5.500 16.500C1.500 16.500.8 14 .8 12c0-3 2-4.500 4.500-4.700C6.500 3.500 9 1.500 12.500 1.500c4 0 6.500 2.500 7.300 6 1.500 1.500 2 3 2 4.500l-1 4.500z" fill="#ddd" stroke="#333" strokeWidth="1.600" />
          <path d="M5.500 7.500C7 3.500 9 2 12.500 2c3.500 0 6 2.300 6.800 5.500L10 11z" fill="#888" />
          <circle cx="18" cy="15" r="7" fill="#0067c0" />
          <path d="M18 11v1.800M18 14.200v5" stroke="#fff" strokeWidth="1.800" />
        </svg>
        <span className="ml-[26px] tracking-[0.3px]">ENG</span>
        <svg viewBox="0 0 24 18" className="ml-[27px] h-[18px] w-6" fill="none" stroke="currentColor" strokeWidth="1.600" strokeLinecap="round">
          <path d="M1 6.500a15 15 0 0 1 22 0" stroke="#b5ab9e" />
          <path d="M4.300 9.500a10.500 10.500 0 0 1 15.400 0M7.800 12.800a6 6 0 0 1 8.400 0" />
          <circle cx="12" cy="15.700" r="1.800" fill="currentColor" stroke="none" />
        </svg>
        <svg viewBox="0 0 24 20" className="ml-[11px] h-5 w-6" fill="none" stroke="currentColor" strokeWidth="1.600" strokeLinecap="round" strokeLinejoin="round">
          <path d="M1 7.500v5q0 1 1 1h3l5 4.500V2L5 6.500H2q-1 0-1 1zM13.500 7a4.500 4.500 0 0 1 0 6M16.500 4.200a8.500 8.500 0 0 1 0 11.600M19.500 1.500a12.500 12.500 0 0 1 0 17" />
        </svg>
        <svg viewBox="0 0 24 20" className="ml-[12px] h-5 w-6" fill="none" stroke="currentColor" strokeWidth="1.600">
          <path d="M9.500 4.500H17.500q3 0 3 3v7q0 3-3 3H4q-3 0-3-3V12" strokeLinecap="round" />
          <path d="M22 9v4.500" strokeWidth="2.600" strokeLinecap="round" />
          <path d="M5 0L0 8.500h3l-1 5L8.500 6H5.300z" fill="currentColor" stroke="none" />
          <path d="M3.500 15.500V13.500L8 9v6.500z" fill="currentColor" stroke="none" />
        </svg>
        <div className="flex w-[99px] flex-col items-end pb-[1px] leading-6">
          <span className="tracking-[0.29px]">2:53 PM</span>
          <span className="tracking-[0.38px]">5/2/2025</span>
        </div>
      </div>
    </footer>
  );
}

export default function App() {
  return (
    <div className="flex h-[1080px] w-[1920px] flex-col overflow-hidden bg-[#f7f7f7] font-['Open_Sans','Noto_Sans',sans-serif] text-[#111]">
      <TabStrip />
      <AddressRow />
      <div className="mx-[5px] mb-[5px] flex h-[893px] w-[1910px] shrink-0 overflow-hidden rounded-xl border border-[#e4e4e4] bg-[#f9f9f9] shadow-[0_1px_1px_rgba(0,0,0,0.06)]">
        <Sidebar />
        <Main />
      </div>
      <Taskbar />
    </div>
  );
}
